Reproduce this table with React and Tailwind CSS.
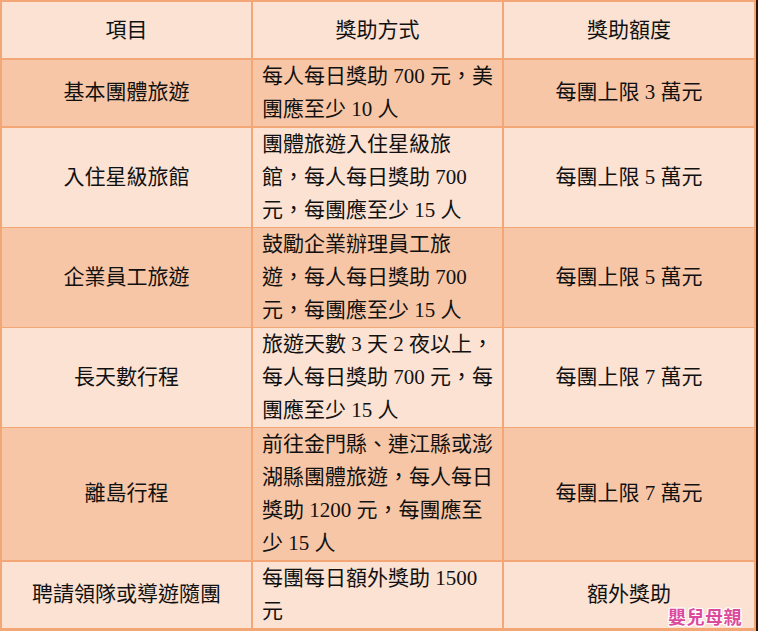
import React from "react";

const LIGHT = "bg-[#fbe2d3]";
const DARK = "bg-[#f7c6a6]";

const rows = [
  {
    h: "h-[66px]",
    bg: DARK,
    item: "基本團體旅遊",
    method: ["每人每日獎助 700 元，美", "團應至少 10 人"],
    amount: "每團上限 3 萬元",
  },
  {
    h: "h-[98px]",
    bg: LIGHT,
    item: "入住星級旅館",
    method: ["團體旅遊入住星級旅", "館，每人每日獎助 700", "元，每團應至少 15 人"],
    amount: "每團上限 5 萬元",
  },
  {
    h: "h-[98px]",
    bg: DARK,
    item: "企業員工旅遊",
    method: ["鼓勵企業辦理員工旅", "遊，每人每日獎助 700", "元，每團應至少 15 人"],
    amount: "每團上限 5 萬元",
  },
  {
    h: "h-[98px]",
    bg: LIGHT,
    item: "長天數行程",
    method: ["旅遊天數 3 天 2 夜以上，", "每人每日獎助 700 元，每", "團應至少 15 人"],
    amount: "每團上限 7 萬元",
  },
  {
    h: "h-[132px]",
    bg: DARK,
    item: "離島行程",
    method: ["前往金門縣、連江縣或澎", "湖縣團體旅遊，每人每日", "獎助 1200 元，每團應至", "少 15 人"],
    amount: "每團上限 7 萬元",
  },
  {
    h: "h-[66px]",
    bg: LIGHT,
    item: "聘請領隊或導遊隨團",
    method: ["每團每日額外獎助 1500", "元"],
    amount: "額外獎助",
    logo: true,
  },
];

export default function App() {
  return (
    <div
      className="flex w-[758px] h-[631px] overflow-hidden text-[#111] text-[21px]"
      style={{ fontFamily: '"Liberation Serif", "Noto Sans CJK TC", serif' }}
    >
      <div className="w-[756px] h-[631px] bg-[#f3a676] pt-[2px] pl-[2px] pr-[2px] pb-[3px] flex flex-col gap-[2px]">
        <div className="grid grid-cols-[249px_249px_250px] gap-[2px] h-[56px]">
          <div className={`${LIGHT} flex items-center justify-center pt-[2px]`}>項目</div>
          <div className={`${LIGHT} flex items-center justify-center pt-[2px]`}>獎助方式</div>
          <div className={`${LIGHT} flex items-center justify-center pt-[2px]`}>獎助額度</div>
        </div>
        {rows.map((r, i) => (
          <div key={i} className={`grid grid-cols-[249px_249px_250px] gap-[2px] ${r.h}`}>
            <div className={`${r.bg} flex items-center justify-center`}>{r.item}</div>
            <div className={`${r.bg} flex flex-col justify-center pl-[9px] leading-[33px] whitespace-nowrap`}>
              {r.method.map((l, j) => (
                <div key={j}>{l}</div>
              ))}
            </div>
            <div className={`${r.bg} relative flex items-center justify-center`}>
              {r.amount}
              {r.logo && (
                <div
                  className="absolute right-[12px] bottom-[0px] text-[18px] leading-[24px] tracking-[0.5px] font-bold text-[#dc4a9c] [text-shadow:1px_0_0_#fff,-1px_0_0_#fff,0_1px_0_#fff,0_-1px_0_#fff,1px_1px_0_#fff,-1px_-1px_0_#fff,1px_-1px_0_#fff,-1px_1px_0_#fff]"
                  style={{ fontFamily: '"Noto Sans CJK TC", sans-serif' }}
                >
                  嬰兒母親
                </div>
              )}
            </div>
          </div>
        ))}
      </div>
      <div className="w-[2px] h-[631px] bg-[#2b140a]" />
    </div>
  );
}
